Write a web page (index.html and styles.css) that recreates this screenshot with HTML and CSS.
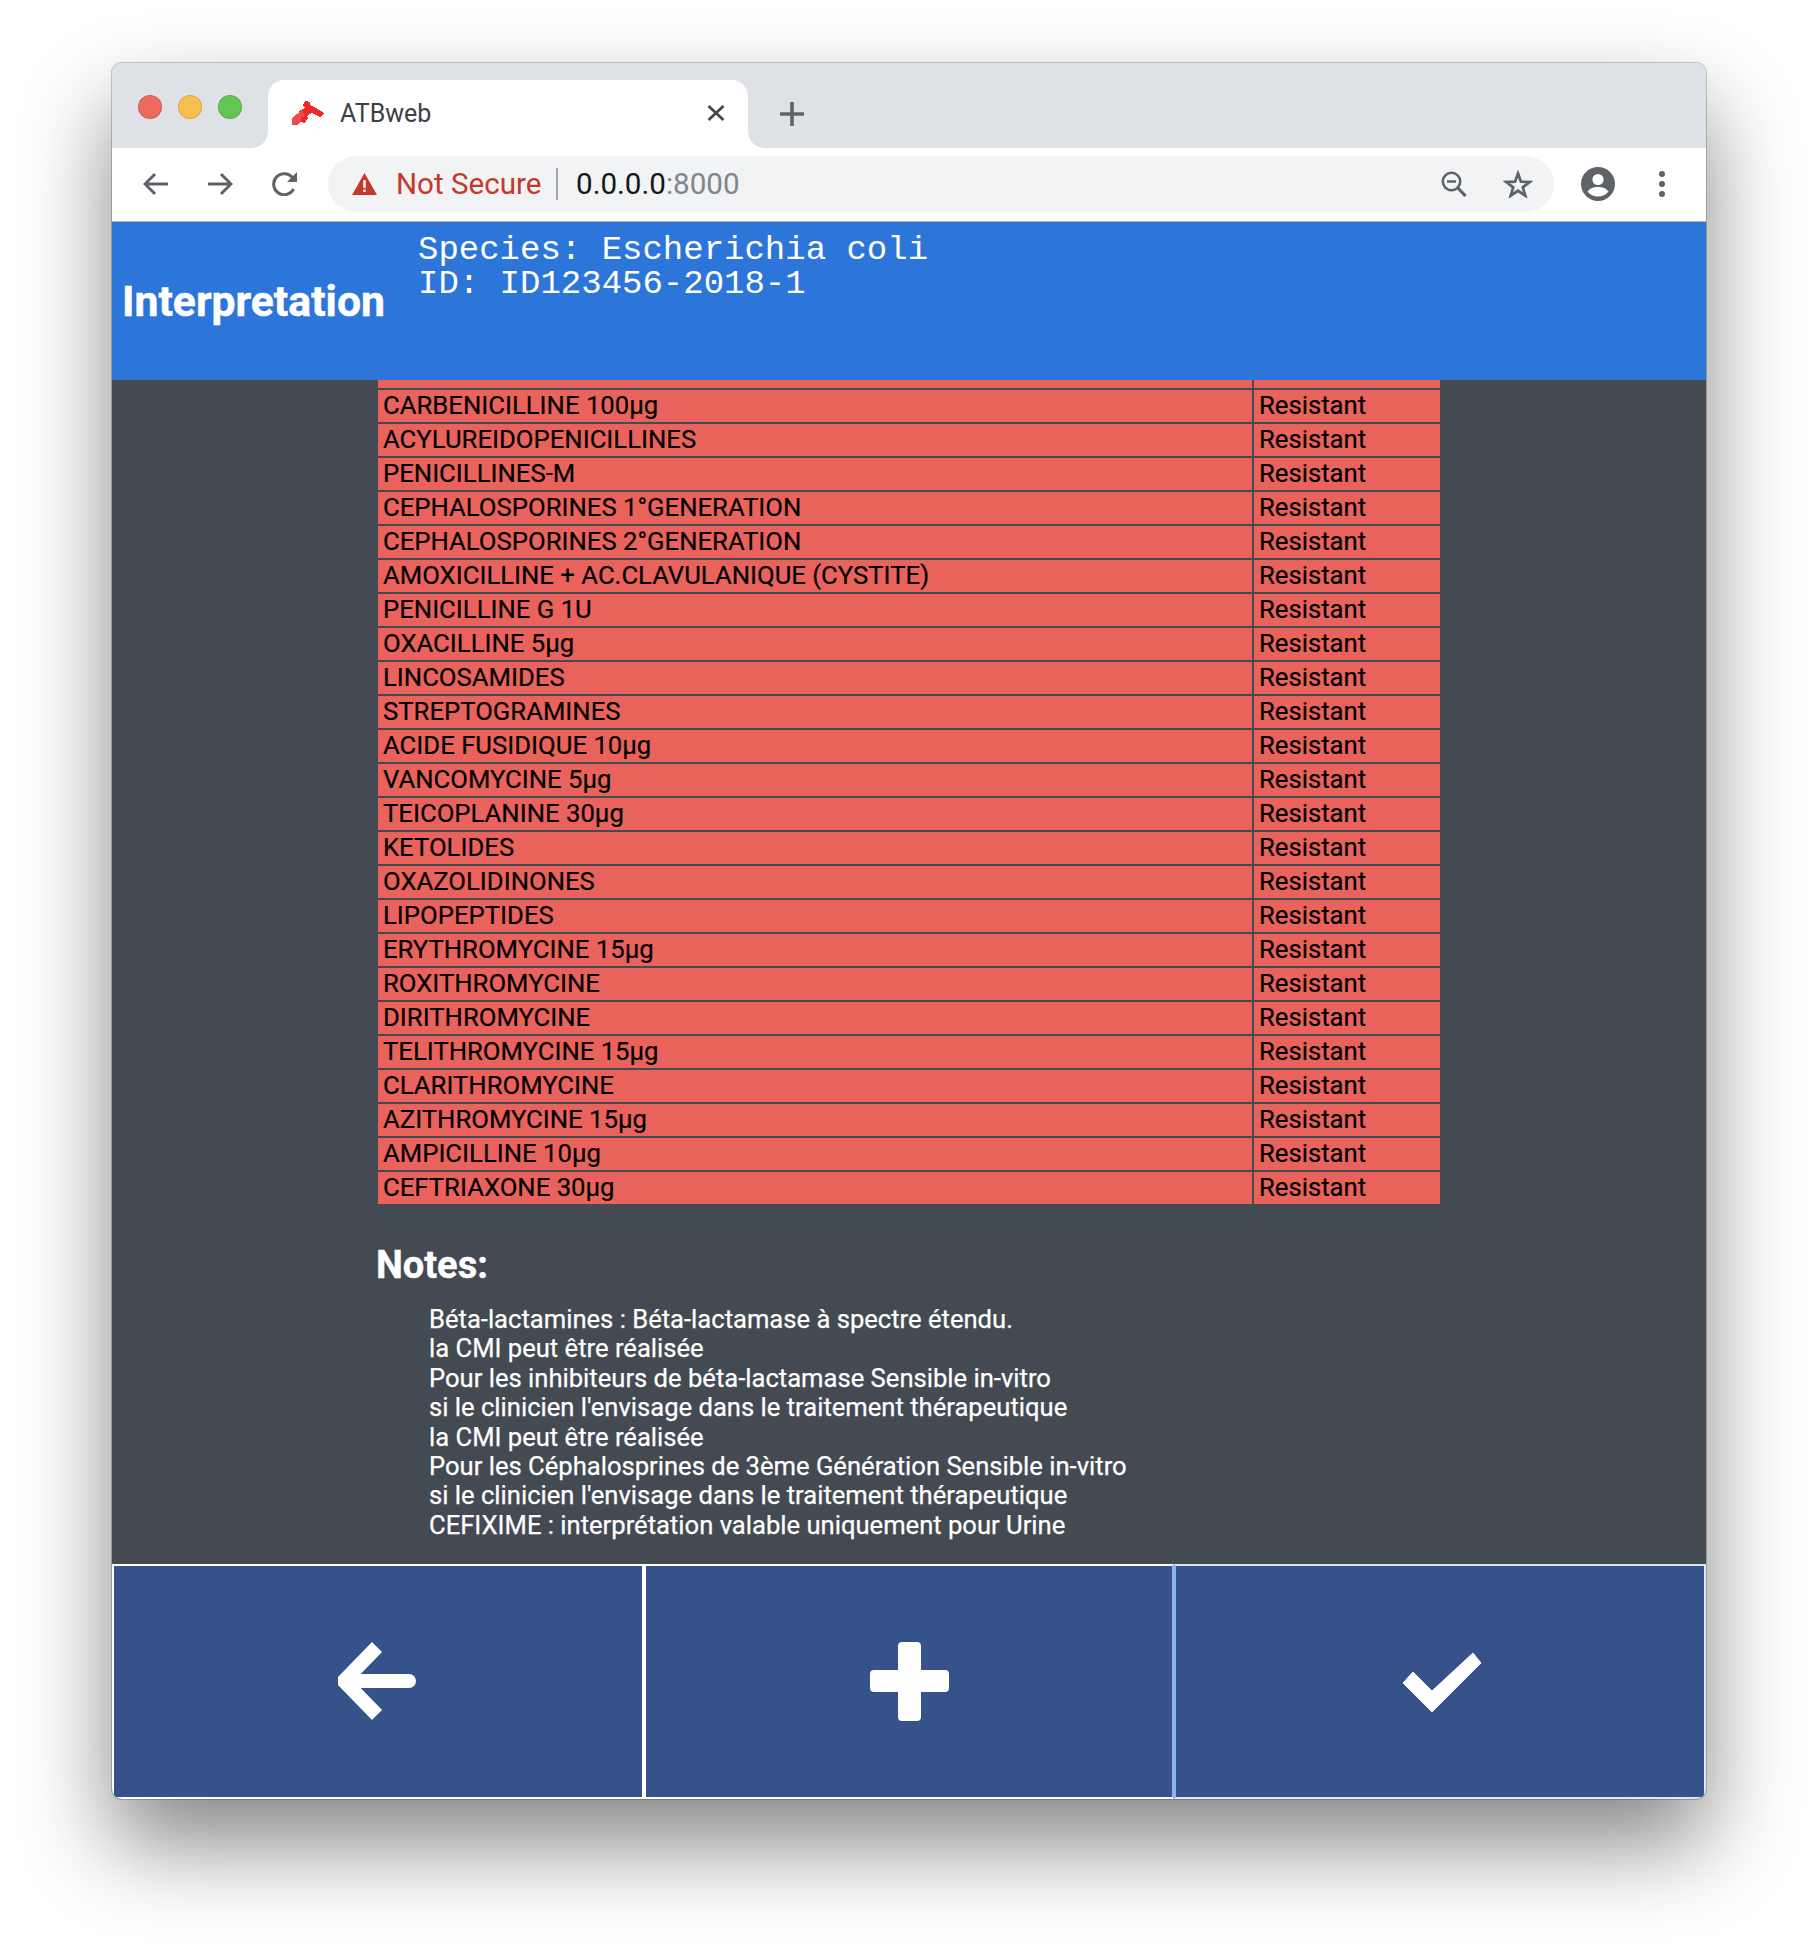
FILE: index.html
```html
<!DOCTYPE html>
<html lang="en">
<head>
    <meta charset="UTF-8">
    <title>ATBweb</title>
    <link rel="stylesheet" href="styles.css">
</head>
<body>
<div class="window">
    <div class="tabstrip">
        <div class="lights">
            <span class="light red"></span>
            <span class="light yellow"></span>
            <span class="light green"></span>
        </div>
        <div class="tab">
            <svg class="favicon" width="32" height="24" viewBox="0 0 32 24" shape-rendering="crispEdges">
                <path fill="#ea2b2b" d="M13 0l5 1v5l-5 1-2-3z"/>
                <path fill="#ea2b2b" d="M7 10l11-6 6 3 8 5-4 4-8-4-3 1-2 3-4-1z"/>
                <path fill="#f04a4a" d="M0 17l10-8 3 6-3 1-1 5-2 1-1 2-6 0z"/>
                <path fill="#ea2b2b" d="M9 16l5-1 2 2-3 5-4-1z"/>
            </svg>
            <span class="tab-title">ATBweb</span>
            <svg class="tab-close" width="18" height="16" viewBox="0 0 18 16">
                <path d="M1.500 1l15 14M16.500 1l-15 14" stroke="#45494d" stroke-width="2.800" fill="none"/>
            </svg>
        </div>
        <svg class="new-tab" width="24" height="24" viewBox="0 0 24 24">
            <path d="M12 0v24M0 12h24" stroke="#5f6368" stroke-width="3.600" fill="none"/>
        </svg>
    </div>

    <div class="toolbar">
        <svg class="nav-icon" width="26" height="24" viewBox="0 0 26 24">
            <path d="M25 12H3M12 2L2 12l10 10" stroke="#5f6368" stroke-width="3" fill="none"/>
        </svg>
        <svg class="nav-icon" width="26" height="24" viewBox="0 0 26 24">
            <path d="M1 12h22M14 2l10 10-10 10" stroke="#5f6368" stroke-width="3" fill="none"/>
        </svg>
        <svg class="nav-icon" width="27" height="24" viewBox="0 0 27 24">
            <path d="M22.500 17a10.500 10.500 0 1 1-.5-10.500" stroke="#5f6368" stroke-width="3" fill="none"/>
            <path d="M26 0v10H16z" fill="#5f6368"/>
        </svg>
        <div class="omnibox">
            <svg class="warn" width="25" height="22" viewBox="0 0 25 22">
                <path d="M12.500 0L25 22H0z" fill="#c5392b"/>
                <path d="M11.300 7h2.400v8h-2.400zM11.300 16.500h2.400v2.600h-2.400z" fill="#fff"/>
            </svg>
            <span class="not-secure">Not Secure</span>
            <span class="url-sep"></span>
            <span class="url">0.0.0.0<span class="url-port">:8000</span></span>
            <svg class="zoom-icon" width="26" height="26" viewBox="0 0 26 26">
                <circle cx="10.500" cy="10.500" r="8.700" stroke="#5f6368" stroke-width="2.600" fill="none"/>
                <path d="M6 10.500h9" stroke="#5f6368" stroke-width="2.400"/>
                <path d="M16.500 16.500l8 8.500" stroke="#5f6368" stroke-width="3.200"/>
            </svg>
            <svg class="star-icon" width="30" height="28" viewBox="0 0 30 28">
                <path d="M15 3.500l3 8.200 8.800.3-7 5.300 2.500 8.400L15 20.800l-7.300 4.900 2.500-8.400-7-5.300 8.800-.3z" stroke="#5f6368" stroke-width="2.800" fill="none"/>
            </svg>
        </div>
        <svg class="account" width="34" height="34" viewBox="0 0 34 34">
            <circle cx="17" cy="17" r="17" fill="#5f6368"/>
            <circle cx="17" cy="12.500" r="5.600" fill="#fff"/>
            <path d="M6.500 24.500c2.500-3.500 6.500-4.600 10.500-4.600s8 1.100 10.500 4.600c-2.600 3.200-6.300 5-10.500 5s-7.900-1.800-10.500-5z" fill="#fff"/>
        </svg>
        <div class="menu-dots"><span></span><span></span><span></span></div>
    </div>

    <header class="page-head">
        <h1 class="page-title">Interpretation</h1>
        <pre class="sample-info">Species: Escherichia coli
ID: ID123456-2018-1</pre>
    </header>

    <main class="content">
        <table class="results">
            <tr class="clipped"><td></td><td></td></tr>
            <tr><td>CARBENICILLINE 100µg</td><td>Resistant</td></tr>
            <tr><td>ACYLUREIDOPENICILLINES</td><td>Resistant</td></tr>
            <tr><td>PENICILLINES-M</td><td>Resistant</td></tr>
            <tr><td>CEPHALOSPORINES 1°GENERATION</td><td>Resistant</td></tr>
            <tr><td>CEPHALOSPORINES 2°GENERATION</td><td>Resistant</td></tr>
            <tr><td>AMOXICILLINE + AC.CLAVULANIQUE (CYSTITE)</td><td>Resistant</td></tr>
            <tr><td>PENICILLINE G 1U</td><td>Resistant</td></tr>
            <tr><td>OXACILLINE 5µg</td><td>Resistant</td></tr>
            <tr><td>LINCOSAMIDES</td><td>Resistant</td></tr>
            <tr><td>STREPTOGRAMINES</td><td>Resistant</td></tr>
            <tr><td>ACIDE FUSIDIQUE 10µg</td><td>Resistant</td></tr>
            <tr><td>VANCOMYCINE 5µg</td><td>Resistant</td></tr>
            <tr><td>TEICOPLANINE 30µg</td><td>Resistant</td></tr>
            <tr><td>KETOLIDES</td><td>Resistant</td></tr>
            <tr><td>OXAZOLIDINONES</td><td>Resistant</td></tr>
            <tr><td>LIPOPEPTIDES</td><td>Resistant</td></tr>
            <tr><td>ERYTHROMYCINE 15µg</td><td>Resistant</td></tr>
            <tr><td>ROXITHROMYCINE</td><td>Resistant</td></tr>
            <tr><td>DIRITHROMYCINE</td><td>Resistant</td></tr>
            <tr><td>TELITHROMYCINE 15µg</td><td>Resistant</td></tr>
            <tr><td>CLARITHROMYCINE</td><td>Resistant</td></tr>
            <tr><td>AZITHROMYCINE 15µg</td><td>Resistant</td></tr>
            <tr><td>AMPICILLINE 10µg</td><td>Resistant</td></tr>
            <tr><td>CEFTRIAXONE 30µg</td><td>Resistant</td></tr>
        </table>
        <h2 class="notes-title">Notes:</h2>
        <p class="notes">Béta-lactamines : Béta-lactamase à spectre étendu.<br>
            la CMI peut être réalisée<br>
            Pour les inhibiteurs de béta-lactamase Sensible in-vitro<br>
            si le clinicien l'envisage dans le traitement thérapeutique<br>
            la CMI peut être réalisée<br>
            Pour les Céphalosprines de 3ème Génération Sensible in-vitro<br>
            si le clinicien l'envisage dans le traitement thérapeutique<br>
            CEFIXIME : interprétation valable uniquement pour Urine</p>
    </main>

    <footer class="actions">
        <button class="action">
            <svg width="80" height="80" viewBox="0 0 80 80">
                <path d="M71 39H13" stroke="#fff" stroke-width="14" stroke-linecap="round" fill="none"/>
                <path d="M39 5L6 39l33 34" stroke="#fff" stroke-width="14" stroke-linejoin="round" fill="none"/>
            </svg>
        </button>
        <button class="action action-mid">
            <svg width="79" height="79" viewBox="0 0 79 79">
                <path d="M28 4a4 4 0 0 1 4-4h15a4 4 0 0 1 4 4v24h24a4 4 0 0 1 4 4v14a4 4 0 0 1-4 4H51v25a4 4 0 0 1-4 4H32a4 4 0 0 1-4-4V50H4a4 4 0 0 1-4-4V32a4 4 0 0 1 4-4h24z" fill="#fff"/>
            </svg>
        </button>
        <button class="action action-focus">
            <svg width="80" height="60" viewBox="0 0 80 60">
                <path d="M11 20l19 19 41-38 8 10-49 49L1 31z" fill="#fff" stroke="#fff" stroke-width="1" stroke-linejoin="round"/>
            </svg>
        </button>
    </footer>
</div>
</body>
</html>
```

FILE: styles.css
```css
* {
    box-sizing: border-box;
}
body {
    margin: 0;
    background: #ffffff;
    font-family: Roboto, sans-serif;
    padding: 63px 112px 0 112px;
    height: 1960px;
    overflow: hidden;
}
.window {
    width: 1594px;
    height: 1736px;
    border-radius: 10px;
    overflow: hidden;
    display: flex;
    flex-direction: column;
    box-shadow: 0 45px 90px rgba(0, 0, 0, 0.48), 0 0 0 1px rgba(0, 0, 0, 0.2);
}

/* browser chrome */
.tabstrip {
    height: 85px;
    background: #dee1e6;
    display: flex;
    align-items: flex-start;
    flex-shrink: 0;
}
.lights {
    display: flex;
    gap: 16px;
    padding: 32px 0 0 26px;
    width: 156px;
}
.light {
    width: 24px;
    height: 24px;
    border-radius: 50%;
    border: 1px solid rgba(0, 0, 0, 0.12);
}
.red {
    background: #ee6a5f;
}
.yellow {
    background: #f6bf4f;
}
.green {
    background: #62c554;
}
.tab {
    position: relative;
    width: 480px;
    height: 68px;
    margin-top: 17px;
    background: #ffffff;
    border-radius: 16px 16px 0 0;
    display: flex;
    align-items: center;
    padding: 0 23px 2px 24px;
}
.tab::before,
.tab::after {
    content: "";
    position: absolute;
    bottom: 0;
    width: 16px;
    height: 16px;
}
.tab::before {
    left: -16px;
    background: radial-gradient(circle at 0 0, #dee1e6 15.5px, #ffffff 16px);
}
.tab::after {
    right: -16px;
    background: radial-gradient(circle at 100% 0, #dee1e6 15.5px, #ffffff 16px);
}
.favicon {
    margin-right: 16px;
}
.tab-title {
    font-size: 25px;
    color: #3c4043;
    flex: 1;
}
.new-tab {
    margin: 39px 0 0 32px;
}
.toolbar {
    height: 74px;
    background: #ffffff;
    border-bottom: 1px solid #b5b5b5;
    display: flex;
    align-items: center;
    flex-shrink: 0;
    padding: 0 0 1px 31px;
}
.nav-icon {
    margin-right: 38px;
}
.nav-icon:nth-child(3) {
    margin-right: 30px;
}
.omnibox {
    width: 1226px;
    height: 56px;
    border-radius: 28px;
    background: #f1f3f4;
    display: flex;
    align-items: center;
    padding-left: 24px;
    font-size: 29.6px;
}
.warn {
    margin-right: 19px;
}
.not-secure {
    color: #c5392b;
    width: 160px;
}
.url-sep {
    width: 2px;
    height: 32px;
    background: #a0a4a8;
    margin-right: 18px;
}
.url {
    color: #15181b;
    flex: 1;
}
.url-port {
    color: #80868b;
}
.zoom-icon {
    margin-right: 36px;
}
.star-icon {
    margin-right: 21px;
}
.account {
    margin-left: 27px;
}
.menu-dots {
    display: flex;
    flex-direction: column;
    gap: 4px;
    margin-left: 44px;
}
.menu-dots span {
    width: 6px;
    height: 6px;
    border-radius: 50%;
    background: #5f6368;
}

/* page */
.page-head {
    height: 158px;
    background: #2c75d9;
    color: #ffffff;
    display: flex;
    flex-shrink: 0;
}
.page-title {
    margin: 0;
    font-size: 42.7px;
    font-weight: 700;
    -webkit-text-stroke: 0.5px #ffffff;
    align-self: center;
    padding-left: 10px;
    width: 306px;
    white-space: nowrap;
}
.sample-info {
    margin: 11px 0 0;
    font-family: "Liberation Mono", monospace;
    font-size: 34px;
    line-height: 34px;
}
.content {
    flex: 1;
    background: #434a52;
    overflow: hidden;
    padding-left: 266px;
}
.results {
    width: 1062px;
    border-collapse: separate;
    border-spacing: 0;
    background: #ea625c;
    font-size: 25.7px;
    color: #000000;
    -webkit-text-stroke: 0.2px #000000;
}
.results td {
    height: 34px;
    padding: 0 5px 2px 5px;
    border-bottom: 2px solid #434a52;
    line-height: 30px;
    white-space: nowrap;
}
.results .clipped td {
    height: 10px;
    padding: 0;
    line-height: 0;
}
.results tr:last-child td {
    border-bottom: 0;
    height: 32px;
}
.results td:first-child {
    width: 876px;
    border-right: 2px solid #434a52;
}
.results td:last-child {
    padding-left: 5px;
}
.notes-title {
    margin: 39px 0 0 -2px;
    font-size: 38px;
    font-weight: 700;
    color: #ffffff;
    -webkit-text-stroke: 0.4px #ffffff;
}
.notes {
    margin: 18px 0 0 51px;
    font-size: 25.6px;
    color: #ffffff;
    line-height: 29.4px;
    -webkit-text-stroke: 0.25px #ffffff;
}

/* bottom buttons */
.actions {
    display: flex;
    height: 235px;
    flex-shrink: 0;
}
.action {
    flex: 1;
    margin: 0;
    padding: 0;
    background: #36528a;
    border: 2px solid #ffffff;
    display: flex;
    align-items: center;
    justify-content: center;
}
.action-mid {
    flex: 0 0 530px;
    border-right-color: #8ab4f0;
}
.action-focus {
    border-color: #dbe7fb;
    border-left-color: #8ab4f0;
}
.action-focus svg {
    margin-left: 3px;
}
```
